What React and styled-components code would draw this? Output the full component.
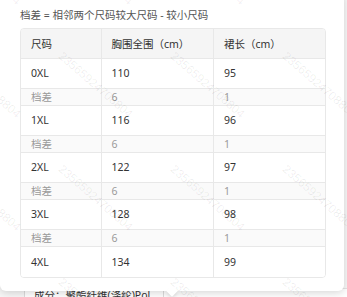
import React from "react";
import styled, { createGlobalStyle } from "styled-components";

const GlobalStyle = createGlobalStyle`
  html, body {
    margin: 0;
    padding: 0;
    background: #ffffff;
  }
  body {
    font-family: "Noto Sans", "Noto Sans CJK SC", sans-serif;
  }
`;

const Stage = styled.div`
  position: relative;
  width: 347px;
  height: 297px;
  overflow: hidden;
  background: #f7f7f7;
`;

// page underneath the popover
const Page = styled.div`
  display: flex;
  height: 100%;
`;

const PageMain = styled.div`
  flex: 1;
  display: flex;
  flex-direction: column;
  justify-content: flex-end;
  padding-left: 24px;
`;

const SpecRow = styled.div`
  display: flex;
  height: 8px;
  border-top: 1px solid #e4e4e4;
  background: #fff;
`;

const SpecCell = styled.div`
  width: ${(p) => p.$w}px;
  border-left: 1px solid #dcdcdc;
  padding-left: 9px;
  font-size: 10.5px;
  line-height: 12px;
  color: #333;
  white-space: nowrap;
  overflow: hidden;
`;

const PageSide = styled.div`
  width: 6px;
  display: flex;
  flex-direction: column;
  padding-top: 36px;
  gap: 4px;
`;

const SideText = styled.div`
  height: 3px;
  width: 6px;
  background: ${(p) => p.$c};
  margin-top: ${(p) => p.$mt || 0}px;
`;

const Popover = styled.div`
  position: absolute;
  left: 0;
  top: -8px;
  width: 344px;
  height: 299px;
  box-sizing: border-box;
  background: #fff;
  border-radius: 6px;
  box-shadow: 0 2px 8px rgba(0, 0, 0, 0.16);
  padding: 16px 20px 0 20px;
`;

const Arrow = styled.div`
  position: absolute;
  left: 168px;
  bottom: -4px;
  width: 8px;
  height: 8px;
  background: #fff;
  transform: rotate(45deg);
  box-shadow: 2px 2px 3px rgba(0, 0, 0, 0.08);
`;

const Caption = styled.div`
  font-size: 10.5px;
  line-height: 14px;
  color: #555;
  margin-bottom: 6px;
`;

const Table = styled.table`
  width: 304px;
  border-collapse: separate;
  border-spacing: 0;
  border: 1px solid #e8e8e8;
  border-radius: 4px;
  overflow: hidden;
  table-layout: fixed;
  font-size: 10.5px;
`;

const HeadCell = styled.th`
  height: 30px;
  box-sizing: border-box;
  padding: 0 10px;
  text-align: left;
  font-weight: normal;
  color: #333;
  background: #f5f5f5;
  border-bottom: 1px solid #e8e8e8;
  border-left: ${(p) => (p.$first ? "none" : "1px solid #e8e8e8")};
  white-space: nowrap;
`;

const Cell = styled.td`
  height: ${(p) => (p.$diff ? 17.5 : 29.5)}px;
  box-sizing: border-box;
  padding: 0 10px;
  color: ${(p) => (p.$diff ? "#9a9a9a" : "#333")};
  background: ${(p) => (p.$diff ? "#fafafa" : "#fff")};
  border-left: ${(p) => (p.$first ? "none" : "1px solid #e8e8e8")};
  border-bottom: ${(p) => (p.$last ? "none" : "1px solid #e8e8e8")};
  line-height: 12px;
  white-space: nowrap;
`;

const Marks = styled.div`
  position: absolute;
  inset: 0;
  pointer-events: none;
`;

const Mark = styled.span`
  position: absolute;
  left: ${(p) => p.$x}px;
  top: ${(p) => p.$y}px;
  font-family: "Liberation Sans", sans-serif;
  font-size: 12px;
  color: rgba(0, 0, 0, 0.07);
  transform: rotate(41deg);
  transform-origin: left top;
  white-space: nowrap;
`;

const rows = [
  ["0XL", "110", "95"],
  ["1XL", "116", "96"],
  ["2XL", "122", "97"],
  ["3XL", "128", "98"],
  ["4XL", "134", "99"],
];

const markXs = [-47, 65, 177, 289];
const markYs = [-64, 49, 162, 275];

export default function App() {
  const body = [];
  rows.forEach((r, i) => {
    const lastData = i === rows.length - 1;
    body.push(
      <tr key={r[0]}>
        <Cell $first $last={lastData}>{r[0]}</Cell>
        <Cell $last={lastData}>{r[1]}</Cell>
        <Cell $last={lastData}>{r[2]}</Cell>
      </tr>
    );
    if (!lastData) {
      body.push(
        <tr key={r[0] + "-d"}>
          <Cell $diff $first>档差</Cell>
          <Cell $diff>6</Cell>
          <Cell $diff>1</Cell>
        </tr>
      );
    }
  });

  return (
    <>
      <GlobalStyle />
      <Stage>
        <Page>
          <PageMain>
            <SpecRow>
              <SpecCell $w={129}>成分：聚酯纤维(涤纶)Pol</SpecCell>
              <SpecCell $w={180} />
            </SpecRow>
          </PageMain>
          <PageSide>
            <SideText $c="#333" />
            <SideText $c="#bbb" $mt={4} />
            <SideText $c="#7fd08a" $mt={58} />
            <SideText $c="#7fd08a" />
            <SideText $c="#21a838" $mt={42} />
            <SideText $c="#21a838" $mt={6} />
          </PageSide>
        </Page>
        <Popover>
          <Caption>档差 = 相邻两个尺码较大尺码 - 较小尺码</Caption>
          <Table>
            <colgroup>
              <col style={{ width: 79.5 }} />
              <col style={{ width: 112.5 }} />
              <col style={{ width: 112 }} />
            </colgroup>
            <thead>
              <tr>
                <HeadCell $first>尺码</HeadCell>
                <HeadCell>胸围全围（cm）</HeadCell>
                <HeadCell>裙长（cm）</HeadCell>
              </tr>
            </thead>
            <tbody>{body}</tbody>
          </Table>
          <Arrow />
        </Popover>
        <Marks>
          {markYs.map((y) =>
            markXs.map((x) => (
              <Mark key={x + "_" + y} $x={x} $y={y}>
                23565924708804
              </Mark>
            ))
          )}
        </Marks>
      </Stage>
    </>
  );
}
